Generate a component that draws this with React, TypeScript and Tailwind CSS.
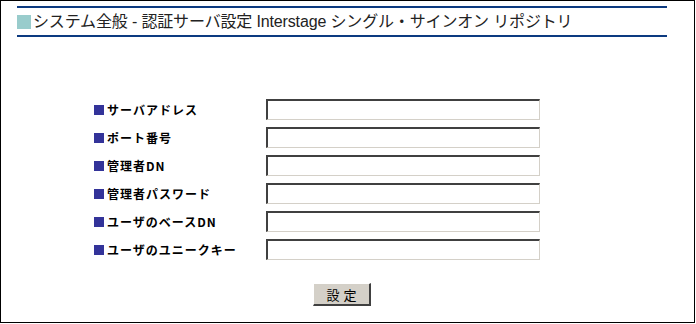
import React from "react";

const labels = [
  "サーバアドレス",
  "ポート番号",
  "管理者DN",
  "管理者パスワード",
  "ユーザのベースDN",
  "ユーザのユニークキー",
];

export default function App() {
  return (
    <div
      className="w-[695px] h-[323px] border border-black bg-white"
      style={{ fontFamily: '"Liberation Sans", "Noto Sans CJK JP", sans-serif' }}
    >
      <div className="ml-[16px] mt-[5px] w-[650px] border-t-2 border-b-2 border-[#0c3a80]">
        <div className="h-[27px] flex items-center">
          <div className="w-[14px] h-[14px] bg-[#99cccc] mr-[2px]" />
          <span className="text-[16px] leading-none text-[#222] whitespace-nowrap tracking-[-0.15px]">
            システム全般 - 認証サーバ設定 Interstage シングル・サインオン リポジトリ
          </span>
        </div>
      </div>

      <div className="mt-[62px] flex flex-col gap-[7px]">
        {labels.map((l) => (
          <div key={l} className="flex items-center h-[21px]">
            <div className="w-[93px]" />
            <div className="w-[172px] flex items-center">
              <div className="w-[10px] h-[10px] bg-[#333399] mr-[3px]" />
              <span
                className="text-[12px] font-bold text-black leading-none tracking-[1px]"
                style={{ fontFamily: '"Noto Sans CJK JP", sans-serif' }}
              >
                {l}
              </span>
            </div>
            <input
              type="text"
              className="w-[274px] h-[21px] bg-white border-solid border-t-2 border-l-2 border-b border-r border-t-[#404040] border-l-[#404040] border-b-[#d4d0c8] border-r-[#d4d0c8] outline-none"
            />
          </div>
        ))}
      </div>

      <div className="mt-[23px] flex">
        <div className="w-[312px]" />
        <button
          type="button"
          className="w-[58px] h-[23px] bg-[#d4d0c8] border-solid border-t border-l border-b-2 border-r-2 border-t-white border-l-white border-b-[#404040] border-r-[#404040] text-[13px] text-black leading-none tracking-[4px] pl-[4px]"
          style={{ fontFamily: '"Noto Sans CJK JP", sans-serif' }}
        >
          設定
        </button>
      </div>
    </div>
  );
}
